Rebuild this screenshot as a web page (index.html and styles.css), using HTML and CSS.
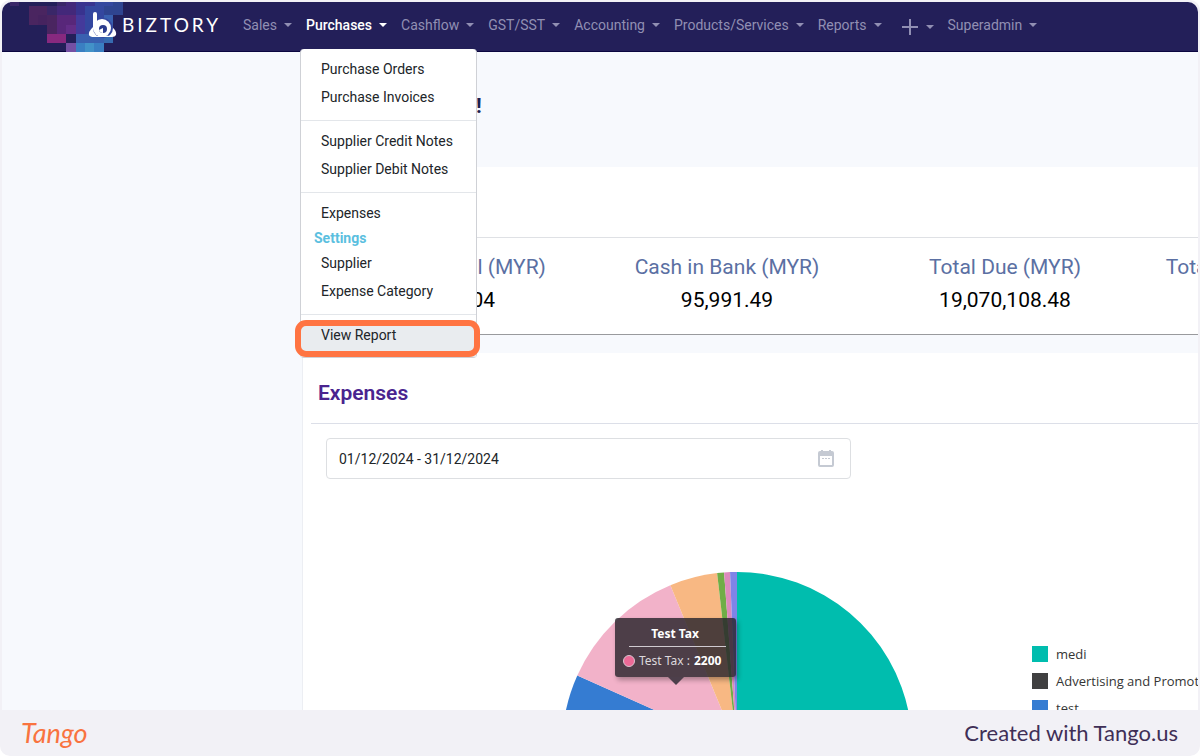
FILE: index.html
```html
<!DOCTYPE html>
<html lang="en">
<head>
  <meta charset="UTF-8" />
  <meta name="viewport" content="width=device-width, initial-scale=1.0"/>
  <title>Biztory - Dashboard</title>
  <link rel="stylesheet" href="styles.css">
</head>
<body>
  <div class="frame">
    <div class="app">
      <nav class="navbar">
        <a href="#home" class="brand">
          <svg class="brand-art" viewBox="0 0 122 50" aria-hidden="true">
            <path fill="#3a2768" d="M8 0h9v4H8zM45 4h10v9H45zM55 0h9v4h-9z"/>
            <path fill="#4a2560" d="M27 4h18v9H27zM27 13h9v10h-9zM45 13h10v10H45zM45 23h19v9H45z"/>
            <path fill="#6a2866" d="M36 13h9v10h-9z" opacity=".5"/>
            <path fill="#58277a" d="M55 13h9v10h-9zM64 13h10v19H64zM55 23h9v9h-9z"/>
            <path fill="#43287a" d="M55 4h19v9H55zM64 0h10v4H64z"/>
            <path fill="#87297f" d="M45 32h19v9H45z"/>
            <path fill="#6a3290" d="M64 23h10v9H64z" opacity=".6"/>
            <path fill="#7550a4" d="M64 41h10v9H64z"/>
            <path fill="#38338f" d="M74 0h19v13H74z"/>
            <path fill="#443a9b" d="M74 13h9v19h-9z"/>
            <path fill="#34479f" d="M83 4h19v28H83zM93 0h18v4H93z"/>
            <path fill="#3960b0" d="M74 32h28v9H74zM102 13h9v28h-9z"/>
            <path fill="#2f4490" d="M102 4h19v9h-19zM111 0h10v4h-10z"/>
            <path fill="#3a7fc2" d="M74 41h28v9H74z"/>
            <path fill="#4292c8" d="M83 41h9v9h-9z"/>
            <path fill="#376bb0" d="M102 41h9v-9h-9z"/>
            <path fill="#fff" d="M91 25q-5 5-4 8q1 2 5 2h18q3 0 4-2q1-4-4-8z"/>
            <circle cx="101" cy="26" r="10" fill="#34479f"/>
            <path fill="#fff" d="M92 35q9-4 18 0z"/>
            <path d="M93 12v14" stroke="#fff" stroke-width="4" stroke-linecap="round"/>
            <circle cx="100" cy="26" r="9" fill="#fff"/>
            <circle cx="101" cy="27" r="4" fill="#2c3c8e"/>
            <path fill="#fff" d="M97 28l4-2v5q-3 0-4-3z"/>
          </svg>
          <span class="brand-name">BIZTORY</span>
        </a>
        <ul class="nav-list">
          <li><a href="#sales" class="nav-link">Sales</a></li>
          <li class="dropdown">
            <a href="#purchases" class="nav-link active">Purchases</a>
            <div class="menu">
              <a href="#orders">Purchase Orders</a>
              <a href="#invoices">Purchase Invoices</a>
              <hr>
              <a href="#credit-notes">Supplier Credit Notes</a>
              <a href="#debit-notes">Supplier Debit Notes</a>
              <hr>
              <a href="#expenses">Expenses</a>
              <h6>Settings</h6>
              <a href="#supplier">Supplier</a>
              <a href="#category">Expense Category</a>
              <hr>
              <a href="#report" class="selected">View Report</a>
            </div>
          </li>
          <li><a href="#cashflow" class="nav-link">Cashflow</a></li>
          <li><a href="#gst" class="nav-link">GST/SST</a></li>
          <li><a href="#accounting" class="nav-link">Accounting</a></li>
          <li><a href="#products" class="nav-link">Products/Services</a></li>
          <li><a href="#reports" class="nav-link">Reports</a></li>
          <li>
            <a href="#add" class="nav-link nav-add" aria-label="Add">
              <svg width="16" height="16" viewBox="0 0 16 16" aria-hidden="true"><path d="M8 0v16M0 8h16" stroke="currentColor" stroke-width="2"/></svg>
            </a>
          </li>
          <li><a href="#superadmin" class="nav-link">Superadmin</a></li>
        </ul>
      </nav>

      <main class="content">
        <h1 class="welcome">Welcome, Admin!</h1>

        <section class="card summary">
          <div class="summary-head"></div>
          <div class="stats">
            <div class="stat"><span>Expense Total (MYR)</span><b>95,872.04</b></div>
            <div class="stat"><span>Cash in Bank (MYR)</span><b>95,991.49</b></div>
            <div class="stat"><span>Total Due (MYR)</span><b>19,070,108.48</b></div>
            <div class="stat"><span>Total Invoices Due (MYR)</span><b>0.00</b></div>
          </div>
        </section>

        <section class="card expenses">
          <h2>Expenses</h2>
          <div class="date-box">
            <input type="text" aria-label="Date range" value="01/12/2024 - 31/12/2024">
            <svg width="16" height="17" viewBox="0 0 16 17" aria-hidden="true">
              <path fill="#c5cad3" fill-rule="evenodd" d="M3 0h2v1h6V0h2v1h1q2 0 2 2v12q0 2-2 2H2q-2 0-2-2V3q0-2 2-2h1zM2 6v9h12V6z"/>
              <path fill="#c5cad3" d="M4 8h2v1H4zM7 8h2v1H7zM10 8h2v1h-2z"/>
            </svg>
          </div>
          <div class="chart">
            <div class="pie">
              <svg width="350" height="350" viewBox="-176 -176 352 352" role="img" aria-label="Expenses by account">
                <path fill="#00bdae" d="M0 0V-176A176 176 0 0 1 60 165.500Z"/>
                <path fill="#404041" d="M0 0L60 165.500A176 176 0 0 1 -120 128.700Z"/>
                <path fill="#357cd2" d="M0 0L-120 128.700A176 176 0 0 1 -160.600 -72Z"/>
                <path fill="#f2b2c9" d="M0 0L-160.600 -72A176 176 0 0 1 -67 -162.700Z"/>
                <path fill="#f8b883" d="M0 0L-67 -162.700A176 176 0 0 1 -20 -174.900Z"/>
                <path fill="#70ad47" d="M0 0L-20 -174.900A176 176 0 0 1 -13 -175.500Z"/>
                <path fill="#dd8abd" d="M0 0L-13 -175.500A176 176 0 0 1 -7 -175.900Z"/>
                <path fill="#7f84e8" d="M0 0L-7 -175.900A176 176 0 0 1 0 -176Z"/>
              </svg>
              <div class="tooltip">
                <strong>Test Tax</strong>
                <p><i></i>Test Tax : <b>2200</b></p>
              </div>
            </div>
            <ul class="legend">
              <li class="teal">medi</li>
              <li class="dark">Advertising and Promotion</li>
              <li class="blue">test</li>
              <li class="pink">Test Tax</li>
              <li class="orange">Rental</li>
              <li class="green">Travel</li>
              <li class="rose">Utilities</li>
              <li class="purple">Others</li>
            </ul>
          </div>
        </section>
      </main>
    </div>

    <footer class="footer">
      <span class="tango">Tango</span>
      <span class="credit">Created with Tango.us</span>
    </footer>
  </div>
</body>
</html>
```
FILE: styles.css
```css
* {
  box-sizing: border-box;
}

body {
  margin: 0;
  font-family: Roboto, sans-serif;
  font-size: 14px;
  color: #212529;
  background: #fff;
}

ul {
  list-style: none;
  margin: 0;
  padding: 0;
}

a {
  text-decoration: none;
}

.frame {
  display: flex;
  flex-direction: column;
  height: 100vh;
  padding: 2px 2px 0;
  background: #f2f1f6;
  border-radius: 10px;
}

.app {
  flex: 1;
  min-height: 0;
  overflow: hidden;
  background: #f7f9fd;
  border-radius: 10px 10px 0 0;
}

.navbar {
  display: flex;
  height: 50px;
  background: #231f59;
  border-bottom: 1px solid #0b0640;
}

.brand {
  display: flex;
  position: relative;
  width: 241px;
  padding-left: 120px;
  color: #fff;
}

.brand-art {
  position: absolute;
  left: 0;
  top: 0;
  width: 122px;
  height: 50px;
}

.brand-name {
  font-family: Lato, sans-serif;
  font-size: 19px;
  line-height: 45px;
  letter-spacing: 3px;
}

.nav-list {
  display: flex;
  gap: 14px;
  height: 45px;
}

.nav-link {
  display: flex;
  align-items: center;
  gap: 7px;
  height: 45px;
  color: #918fb3;
  white-space: nowrap;
}

.nav-link::after {
  content: "";
  border: 4px solid transparent;
  border-top-color: currentColor;
  border-bottom: 0;
}

.nav-link.active {
  color: #fff;
  font-weight: 500;
}

.nav-add {
  gap: 8px;
  padding: 4px 0 0 6px;
}

.dropdown {
  position: relative;
}

.menu {
  position: absolute;
  top: 47px;
  left: -6px;
  z-index: 2;
  width: 177px;
  padding-top: 6px;
  background: #fff;
  border: 1px solid #cfd1d6;
  border-top: 0;
  border-radius: 4px;
}

.menu a {
  display: block;
  padding-left: 20px;
  line-height: 28px;
  color: #212529;
}

.menu hr {
  margin: 9px 0 6px;
  border: 0;
  border-top: 1px solid #e3e6ea;
}

.menu h6 {
  margin: 0;
  padding-left: 13px;
  font-size: 14px;
  line-height: 22px;
  font-weight: 700;
  color: #5bbfe0;
}

.menu .selected {
  position: relative;
  padding-bottom: 8px;
  background: #e9ecef;
}

/* marker around the step to click */
.menu .selected::after {
  content: "";
  position: absolute;
  inset: -1px -4px 0 -6px;
  border: 6px solid #ff7442;
  border-radius: 11px;
}

.content {
  margin-left: 300px;
}

.welcome {
  margin: 0;
  padding: 38px 0 45px 15px;
  font-size: 21px;
  line-height: 32px;
  font-weight: 700;
  color: #1b2050;
}

.card {
  background: #fff;
}

.summary {
  margin-bottom: 18px;
  border-bottom: 1px solid #999a9d;
}

.summary-head {
  height: 71px;
  border-bottom: 1px solid #dfe1e5;
}

.stats {
  display: flex;
  padding: 13px 0 17px 8px;
}

.stat {
  display: flex;
  flex: 0 0 278px;
  flex-direction: column;
  align-items: center;
  font-size: 21px;
  line-height: 33px;
  color: #5b70a3;
}

.stat b {
  font-weight: 400;
  color: #000;
}

.expenses {
  padding-left: 8px;
  border-left: 1px solid #eceef3;
}

.expenses h2 {
  margin: 0 0 14px;
  padding: 24px 0 14px 7px;
  border-bottom: 1px solid #dcdfe8;
  font-size: 21px;
  line-height: 32px;
  font-weight: 600;
  color: #4a248f;
}

.date-box {
  display: flex;
  align-items: center;
  width: 525px;
  height: 41px;
  margin-left: 15px;
  padding: 0 16px 0 12px;
  border: 1px solid #dddfe2;
  border-radius: 4px;
}

.date-box input {
  flex: 1;
  padding: 0;
  border: 0;
  outline: 0;
  font: inherit;
  color: #212529;
}

.chart {
  display: flex;
  align-items: center;
  gap: 120px;
  margin-top: 93px;
  padding-left: 251px;
  font-family: "Open Sans", sans-serif;
}

.pie {
  position: relative;
  height: 352px;
}

.tooltip {
  position: absolute;
  left: 53px;
  top: 46px;
  width: 121px;
  padding: 4px 8px;
  background: rgba(40, 37, 44, 0.82);
  border-radius: 3px;
  box-shadow: 2px 3px 5px rgba(0, 0, 0, 0.3);
  font-family: "Noto Sans", sans-serif;
  font-size: 12px;
  line-height: 24px;
  color: #dcd8dc;
  white-space: nowrap;
}

.tooltip::after {
  content: "";
  position: absolute;
  top: 100%;
  left: 53px;
  border: 8px solid transparent;
  border-top-color: #4d3f4b;
  border-bottom: 0;
}

.tooltip strong {
  display: block;
  margin: 0 2px 0 6px;
  padding-right: 5px;
  border-bottom: 1px solid #cfcad0;
  text-align: center;
  color: #fff;
}

.tooltip p {
  display: flex;
  align-items: center;
  gap: 4px;
  margin: 2px 0 0;
}

.tooltip b {
  color: #fff;
}

.tooltip i {
  width: 12px;
  height: 12px;
  border: 1px solid #d9c5d0;
  border-radius: 50%;
  background: #ec6a97;
}

.legend li {
  display: flex;
  align-items: center;
  gap: 8px;
  height: 27px;
  font-size: 13px;
  color: #353535;
  white-space: nowrap;
}

.legend li::before {
  content: "";
  width: 16px;
  height: 16px;
  background: #00bdae;
}

.legend .dark::before {
  background: #404041;
}

.legend .blue::before {
  background: #357cd2;
}

.legend .pink::before {
  background: #e56590;
}

.legend .orange::before {
  background: #f8b883;
}

.legend .green::before {
  background: #70ad47;
}

.legend .rose::before {
  background: #dd8abd;
}

.legend .purple::before {
  background: #7f84e8;
}

.footer {
  display: flex;
  justify-content: space-between;
  align-items: center;
  height: 46px;
  padding: 0 20px 0 19px;
}

.tango {
  font-family: Lato, cursive;
  font-size: 27px;
  line-height: 46px;
  font-style: italic;
  font-weight: 400;
  color: #f9733f;
}

.credit {
  font-family: Lato, sans-serif;
  font-size: 22px;
  line-height: 46px;
  color: #3f2f56;
}
```
